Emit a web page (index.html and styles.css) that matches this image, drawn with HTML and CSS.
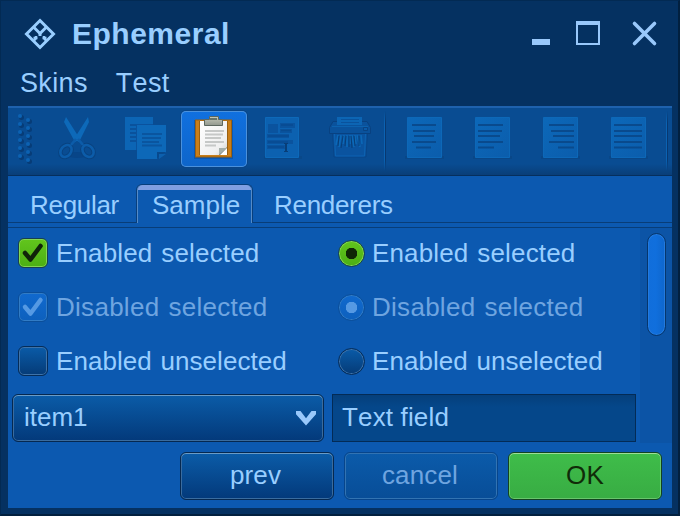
FILE: index.html
```html
<!DOCTYPE html>
<html lang="en">
<head>
<meta charset="utf-8">
<title>Ephemeral</title>
<link rel="stylesheet" href="styles.css">
</head>
<body>
<div class="window">
  <header class="titlebar">
    <svg class="logo" width="34" height="34" viewBox="23 17 34 34"><g fill="none" stroke="#99ceff" stroke-width="3"><path d="M40 20.500 53.500 34 40 47.500 26.500 34Z"/><path d="M33.500 27 40 33.500 46.500 27"/><path d="M40 32v4"/><path stroke-width="2.400" d="M33.500 41l3-3M46.500 41l-3-3M33.500 38h4M46.500 38h-4M36 36v3M44 36v3"/></g></svg>
    <h1>Ephemeral</h1>
    <svg class="controls" width="128" height="28" viewBox="530 18 128 28"><path fill="#99c8fb" d="M532 38h18v6h-18z"/><path fill="#99c8fb" fill-rule="evenodd" d="M576 20h24v24h-24zM578 24v18h20V24z"/><path d="M634.500 22.500 654.500 42.500M654.500 22.500 634.500 42.500" stroke="#99c8fb" stroke-width="3.600" stroke-linecap="round"/></svg>
  </header>
  <nav class="menu"><span>Skins</span><span>Test</span></nav>
  <main class="content">
    <div class="toolbar">
      <svg class="grip" width="16" height="52" viewBox="17 113 16 52"><g fill="#073c77"><circle cx="21.500" cy="117.500" r="2.500"/><circle cx="21.500" cy="125.500" r="2.500"/><circle cx="21.500" cy="133.500" r="2.500"/><circle cx="21.500" cy="141.500" r="2.500"/><circle cx="21.500" cy="149.500" r="2.500"/><circle cx="21.500" cy="157.500" r="2.500"/><circle cx="29.500" cy="121.500" r="2.500"/><circle cx="29.500" cy="129.500" r="2.500"/><circle cx="29.500" cy="137.500" r="2.500"/><circle cx="29.500" cy="145.500" r="2.500"/><circle cx="29.500" cy="153.500" r="2.500"/><circle cx="29.500" cy="161.500" r="2.500"/></g><g fill="#0c62b3"><circle cx="20" cy="116" r="2"/><circle cx="20" cy="124" r="2"/><circle cx="20" cy="132" r="2"/><circle cx="20" cy="140" r="2"/><circle cx="20" cy="148" r="2"/><circle cx="20" cy="156" r="2"/><circle cx="28" cy="120" r="2"/><circle cx="28" cy="128" r="2"/><circle cx="28" cy="136" r="2"/><circle cx="28" cy="144" r="2"/><circle cx="28" cy="152" r="2"/><circle cx="28" cy="160" r="2"/></g></svg>
      <button class="tool" aria-label="Cut"><svg width="66" height="56" viewBox="45 111 66 56"><ellipse cx="77" cy="155" rx="10" ry="3" fill="#084588"/><path fill="#0d69b9" d="M66 117 80 139 75 142 64 122ZM88 117 89 122 79 142 74 139Z"/><g fill="none" stroke="#094381" stroke-width="4.500"><ellipse cx="66" cy="151" rx="5" ry="6.500" transform="rotate(38 66 151)"/><ellipse cx="88" cy="151" rx="5" ry="6.500" transform="rotate(-38 88 151)"/></g><g fill="none" stroke="#0c5ca9" stroke-width="2.600"><ellipse cx="66" cy="151" rx="5" ry="6.500" transform="rotate(38 66 151)"/><ellipse cx="88" cy="151" rx="5" ry="6.500" transform="rotate(-38 88 151)"/><path d="M71 145 76 139M83 145 78 139"/></g></svg></button>
      <button class="tool" aria-label="Copy"><svg width="66" height="56" viewBox="113 111 66 56"><path fill="#0c65b5" d="M125 117h28v33h-28z"/><path stroke="#0a529c" stroke-width="2" d="M130 125h18M130 129h18M130 133h18M130 137h18M130 141h18"/><path fill="#0a529e" d="M136 124h17v26h-17z"/><path fill="#0d68b8" d="M137 125h29v27l-9 7h-20z"/><path fill="#08498d" d="M157 152h9l-9 7z"/><path fill="#0d60ae" d="M159 154h7l-7 5z"/><path stroke="#0a559f" stroke-width="2" d="M142 134h20M142 138h19M142 142h17M142 145.500h20"/></svg></button>
      <button class="tool active" aria-label="Paste"><svg width="66" height="56" viewBox="181 111 66 56"><defs><linearGradient id="paper" x2="1" y2="1"><stop stop-color="#fff"/><stop offset=".75" stop-color="#efefef"/><stop offset="1" stop-color="#c9cecb"/></linearGradient><linearGradient id="clip" x2="0" y2="1"><stop stop-color="#c7c9b9"/><stop offset="1" stop-color="#92988f"/></linearGradient></defs><path fill="#0a4c9f" opacity=".6" d="M194 120h39v39h-39z"/><path fill="#9a600f" d="M195 119.500h37v38h-37z"/><path fill="#c97e19" d="M196 120.500h35v36h-35z"/><path fill="#9b6010" d="M199 121h29v34h-29z"/><path fill="url(#paper)" d="M200 121h27v26l-7 8h-20z"/><path fill="#656f6b" d="M219 148h8v7h-8z"/><path fill="#a5afaa" d="M219 148h8l-8 7z"/><path fill="#fff" d="M220 155h7v-7z"/><path stroke="#c6c8c7" stroke-width="2" d="M205 131h19M205 134.500h18M205 138h16M205 142h19M205 145.500h11"/><path fill="url(#clip)" stroke="#5c675f" d="M204.500 119.500h5v-3h9v3h4v6h-18z"/><path fill="#66736a" d="M210 118h7v2h-7z"/></svg></button>
      <button class="tool" aria-label="Select text"><svg width="66" height="56" viewBox="249 111 66 56"><path fill="#09447f" opacity=".5" d="M264 156h38v3h-38z"/><path fill="#0c61b0" stroke="#0d69b9" d="M265.500 117.500h33v40h-33z"/><path fill="#0a539e" d="M268 124h10v9h-10zM280 123h15v5h-15zM280 129h12v4h-12zM267 134h22v4h-22zM267 140h26v4h-26zM267 145h18v4h-18z"/><path stroke="#084b91" stroke-width="1.500" d="M281 125h12M281 130.500h10M268 136h21M268 142h20M268 147h16"/><path fill="none" stroke="#083e78" stroke-width="2" d="M286 144v7"/><path fill="none" stroke="#083e78" stroke-width="1.200" d="M284 143.500h4M284 151.500h4"/></svg></button>
      <button class="tool" aria-label="Shred"><svg width="66" height="56" viewBox="317 111 66 56"><path fill="#0a539f" stroke="#094587" d="M332.500 133h35l-1.500 24h-32z"/><path fill="none" stroke="#0d63b2" d="M334.500 134l1 22h29l1-22"/><path fill="#0a529c" stroke="#084181" d="M333 121.500h34l3.500 6v6h-41v-6z"/><path fill="#0c65b4" d="M337 117h25v8h-25z"/><path stroke="#0a529c" d="M341 119.500h18M341 122.500h18"/><path stroke="#0c62af" d="M332 126.500h36"/><path fill="#0b5ba9" stroke="#084383" d="M363.500 127.500h4v3h-4z"/><path fill="none" stroke="#0c68b7" stroke-width="1.600" d="M338 135l-2 10M341 135l-2 12M344 135l-1 9M347 135v12M350 135v9M352 135l2 12M355 135l1 9M357 135l3 12M361 135l1 9"/><path fill="none" stroke="#073e78" d="M339 136l-1 10M343 136l-2 12M346 136l-1 10M349 136v11M351 136l1 12M354 136l1 10M359 136v10"/></svg></button>
      <i class="sep"></i>
      <button class="tool" aria-label="Center"><svg width="66" height="56" viewBox="391 111 66 56"><defs><linearGradient id="page" x2="1" y2="1"><stop stop-color="#0c68b9"/><stop offset="1" stop-color="#0b5dac"/></linearGradient></defs><path fill="#09427e" opacity=".5" d="M405 156h39v3h-39z"/><path fill="url(#page)" stroke="#0d68b8" d="M407.500 117.500h34v40h-34z"/><path stroke="#094a8d" stroke-width="2" d="M412 125h24M413 131h22M414 136h20M412 142h24M416 147.500h15"/></svg></button>
      <button class="tool" aria-label="Left"><svg width="66" height="56" viewBox="459 111 66 56"><path fill="#09427e" opacity=".5" d="M473 156h39v3h-39z"/><path fill="url(#page)" stroke="#0d68b8" d="M475.500 117.500h34v40h-34z"/><path stroke="#094a8d" stroke-width="2" d="M478 125h25M478 131h24M478 136h22M478 142h25M478 147.500h16"/></svg></button>
      <button class="tool" aria-label="Right"><svg width="66" height="56" viewBox="527 111 66 56"><path fill="#09427e" opacity=".5" d="M541 156h39v3h-39z"/><path fill="url(#page)" stroke="#0d68b8" d="M543.500 117.500h34v40h-34z"/><path stroke="#094a8d" stroke-width="2" d="M549 125h25M551 131h23M553 136h21M549 142h25M558 147.500h16"/></svg></button>
      <button class="tool" aria-label="Fill"><svg width="66" height="56" viewBox="595 111 66 56"><path fill="#09427e" opacity=".5" d="M609 156h39v3h-39z"/><path fill="url(#page)" stroke="#0d68b8" d="M611.500 117.500h34v40h-34z"/><path stroke="#094a8d" stroke-width="2" d="M614 125h28M614 131h28M614 136h28M614 142h28M614 147.500h28"/></svg></button>
      <i class="sep last"></i>
    </div>
    <div class="tabs"><span class="edge"></span><span class="tab t1">Regular</span><span class="tab selected t2">Sample</span><span class="tab t3">Renderers</span></div>
    <div class="view">
      <div class="form">
        <div class="options">
          <label class="option"><span class="box on"><svg width="30" height="30" viewBox="0 0 30 30"><path d="M7 15 12.500 21.500 22.500 8"/></svg></span><span class="e">Enabled selected</span></label>
          <label class="option"><span class="radio on"></span><span class="e">Enabled selected</span></label>
          <label class="option disabled"><span class="box"><svg width="30" height="30" viewBox="0 0 30 30"><path d="M7 15 12.500 21.500 22.500 8"/></svg></span><span class="d">Disabled selected</span></label>
          <label class="option disabled"><span class="radio"></span><span class="d">Disabled selected</span></label>
          <label class="option"><span class="box"></span><span class="u">Enabled unselected</span></label>
          <label class="option"><span class="radio"></span><span class="u">Enabled unselected</span></label>
        </div>
        <div class="fields">
          <div class="combo raised"><span>item1</span><svg width="24" height="20" viewBox="294 408 24 20"><path d="M296 412h4.500l5.500 7.200 5.500-7.200h4.500v3.200L306 426.500l-10-11.300z" fill="#99c8fb"/></svg></div>
          <div class="text">Text field</div>
        </div>
      </div>
      <div class="track"><div class="thumb"></div></div>
    </div>
    <footer class="actions"><button class="raised prev">prev</button><button class="raised cancel">cancel</button><button class="raised ok">OK</button></footer>
  </main>
</div>
</body>
</html>
```

FILE: styles.css
```css
* { box-sizing: border-box; }
body { margin: 0; font: 26px/30px "Liberation Sans", sans-serif; font-kerning: none; color: #99ceff; }
button { font: inherit; color: inherit; padding: 0; margin: 0; border: 0; background: none; }
svg { display: block; }
span { white-space: nowrap; }
.window { width: 680px; height: 516px; padding: 0 6px 6px 7px; background: #053161; border: solid #032a53; border-width: 1px 2px 2px 1px; border-right-color: #02203f; border-bottom-color: #02203f; overflow: hidden; }
.titlebar { display: flex; align-items: center; height: 65px; padding: 0 14px 0 15px; }
.logo { margin-top: 1px; }
h1 { margin: 0 auto 0 15px; font-size: 30px; line-height: 34px; letter-spacing: .5px; }
.controls { margin-top: -1px; }
.menu { display: flex; gap: 28px; height: 40px; padding-left: 12px; line-height: 34px; font-size: 27px; letter-spacing: .35px; }
.content { width: 664px; height: 402px; background: #0c59b0; }
.toolbar { display: flex; align-items: flex-start; height: 70px; padding: 3px 0 0 9px; border-top: 2px solid #1e61ad; background: linear-gradient(#094c92 0 56px, #093e78 67px, #062f5d 67px 68px); }
.grip { margin: 2px 12px 0 0; }
.tool { width: 66px; height: 56px; margin-right: 2px; flex: none; }
.tool.active { border-radius: 5px; background: linear-gradient(#1070df, #0e65ca); box-shadow: inset 0 0 0 1px #4a91dc, 0 0 0 1px #0a4485; }
.sep { width: 2px; height: 60px; margin: 0 5px 0 -1px; flex: none; background: linear-gradient(90deg, #0b62b2 50%, #083870 50%); -webkit-mask: linear-gradient(transparent, #000 20%, #000 80%, transparent); mask: linear-gradient(transparent, #000 20%, #000 80%, transparent); }
.sep.last { margin: 0 0 0 3px; }
.tabs { display: flex; height: 51px; padding-top: 8px; background: linear-gradient(#083d78, #083d78) 0 46px / 100% 1px no-repeat; }
.edge { width: 22px; }
.tab { height: 39px; padding-top: 6px; }
.t1 { width: 106px; letter-spacing: -.3px; }
.t2 { width: 117px; padding-left: 15px; margin-right: 21px; }
.t3 { letter-spacing: -.3px; }
.selected { border: 1px solid #083f7d; border-bottom: 0; border-radius: 6px 6px 0 0; background: linear-gradient(#809fe2 5px, #0c59b0 5px); box-shadow: inset 1px 0 #548bc8, inset -1px 0 #548bc8; }
.selected { padding-top: 5px; }
.view { display: flex; width: 664px; height: 216px; border-top: 1px solid #083d78; }
.form { width: 632px; padding-left: 4px; }
.options { display: grid; grid-template-columns: 320px 1fr; grid-template-rows: repeat(3, 54px); padding: 0 0 4px 6px; }
.option { display: flex; height: 50px; align-items: center; gap: 8px; }
.box, .radio { width: 30px; height: 30px; border: 1px solid #052c58; border-radius: 6px; background: linear-gradient(#0a5ba8, #053b77); box-shadow: inset 0 0 0 1px #3f73a9; flex: none; }
.box svg { margin: -1px; }
.box path { fill: none; stroke: #102409; stroke-width: 4.500; stroke-linecap: round; stroke-linejoin: round; }
.box.on, .radio.on { border-color: #173f50; background: linear-gradient(#62c51d, #4caf14); box-shadow: inset 0 0 0 1px #83d752; }
.radio { width: 27px; height: 27px; border-radius: 50%; }
.radio + span { margin-left: -1px; }
.radio.on { background: radial-gradient(circle at center, #102706 5.500px, transparent 6px), linear-gradient(#62c51d, #4caf14); }
.disabled { color: #6fa5e0; }
.disabled .box, .disabled .radio { border-color: #0b4e99; background: linear-gradient(#1069ce, #0d60bd); box-shadow: inset 0 0 0 1px #317cc6; }
.disabled .radio { background: radial-gradient(circle at center, #5599e3 5.500px, transparent 6px), linear-gradient(#1069ce, #0d60bd); }
.disabled .box path { stroke: #5599e3; }
.e { letter-spacing: .15px; word-spacing: 1.5px; }
.d { letter-spacing: .28px; word-spacing: 1.5px; }
.u { letter-spacing: .05px; word-spacing: 1.5px; }
.fields { display: flex; gap: 8px; }
.combo { display: flex; width: 312px; justify-content: space-between; align-items: center; padding: 0 5px 2px 11px; }
.raised { height: 48px; border: 1px solid #052850; border-radius: 6px; background: linear-gradient(#0b5ca8, #03397a); box-shadow: inset 0 1px #6a9cc7, inset 0 0 0 1px #3a6c9f; }
.text { width: 304px; height: 48px; padding: 7px 9px; border: 1px solid #032b56; background: linear-gradient(#053f7b, #05478a 12px); letter-spacing: .15px; }
.track { width: 32px; height: 215px; padding: 5px 6px 0 7px; background: #0c54a6; }
.thumb { height: 103px; border: 1px solid #06366c; border-radius: 10px; background: linear-gradient(90deg, #116edb, #106fdd 45%, #0e66cc); box-shadow: inset 0 0 0 1px #237ade; }
.actions { display: flex; justify-content: flex-end; gap: 10px; padding: 9px 10px 0 0; }
.actions button { width: 154px; padding: 0 3px 2px 0; letter-spacing: .15px; }
.actions .cancel { padding-right: 2px; color: #6fa5e0; border-color: #07458b; background: linear-gradient(#0b5baa, #084d97); box-shadow: inset 0 0 0 1px #3273b2; }
.actions .ok { padding-right: 0; color: #102b08; border-color: #124321; background: linear-gradient(#3fbd4a, #38ac43); box-shadow: inset 0 1px #9cdd98, inset 0 0 0 1px #68c56b; }
```
